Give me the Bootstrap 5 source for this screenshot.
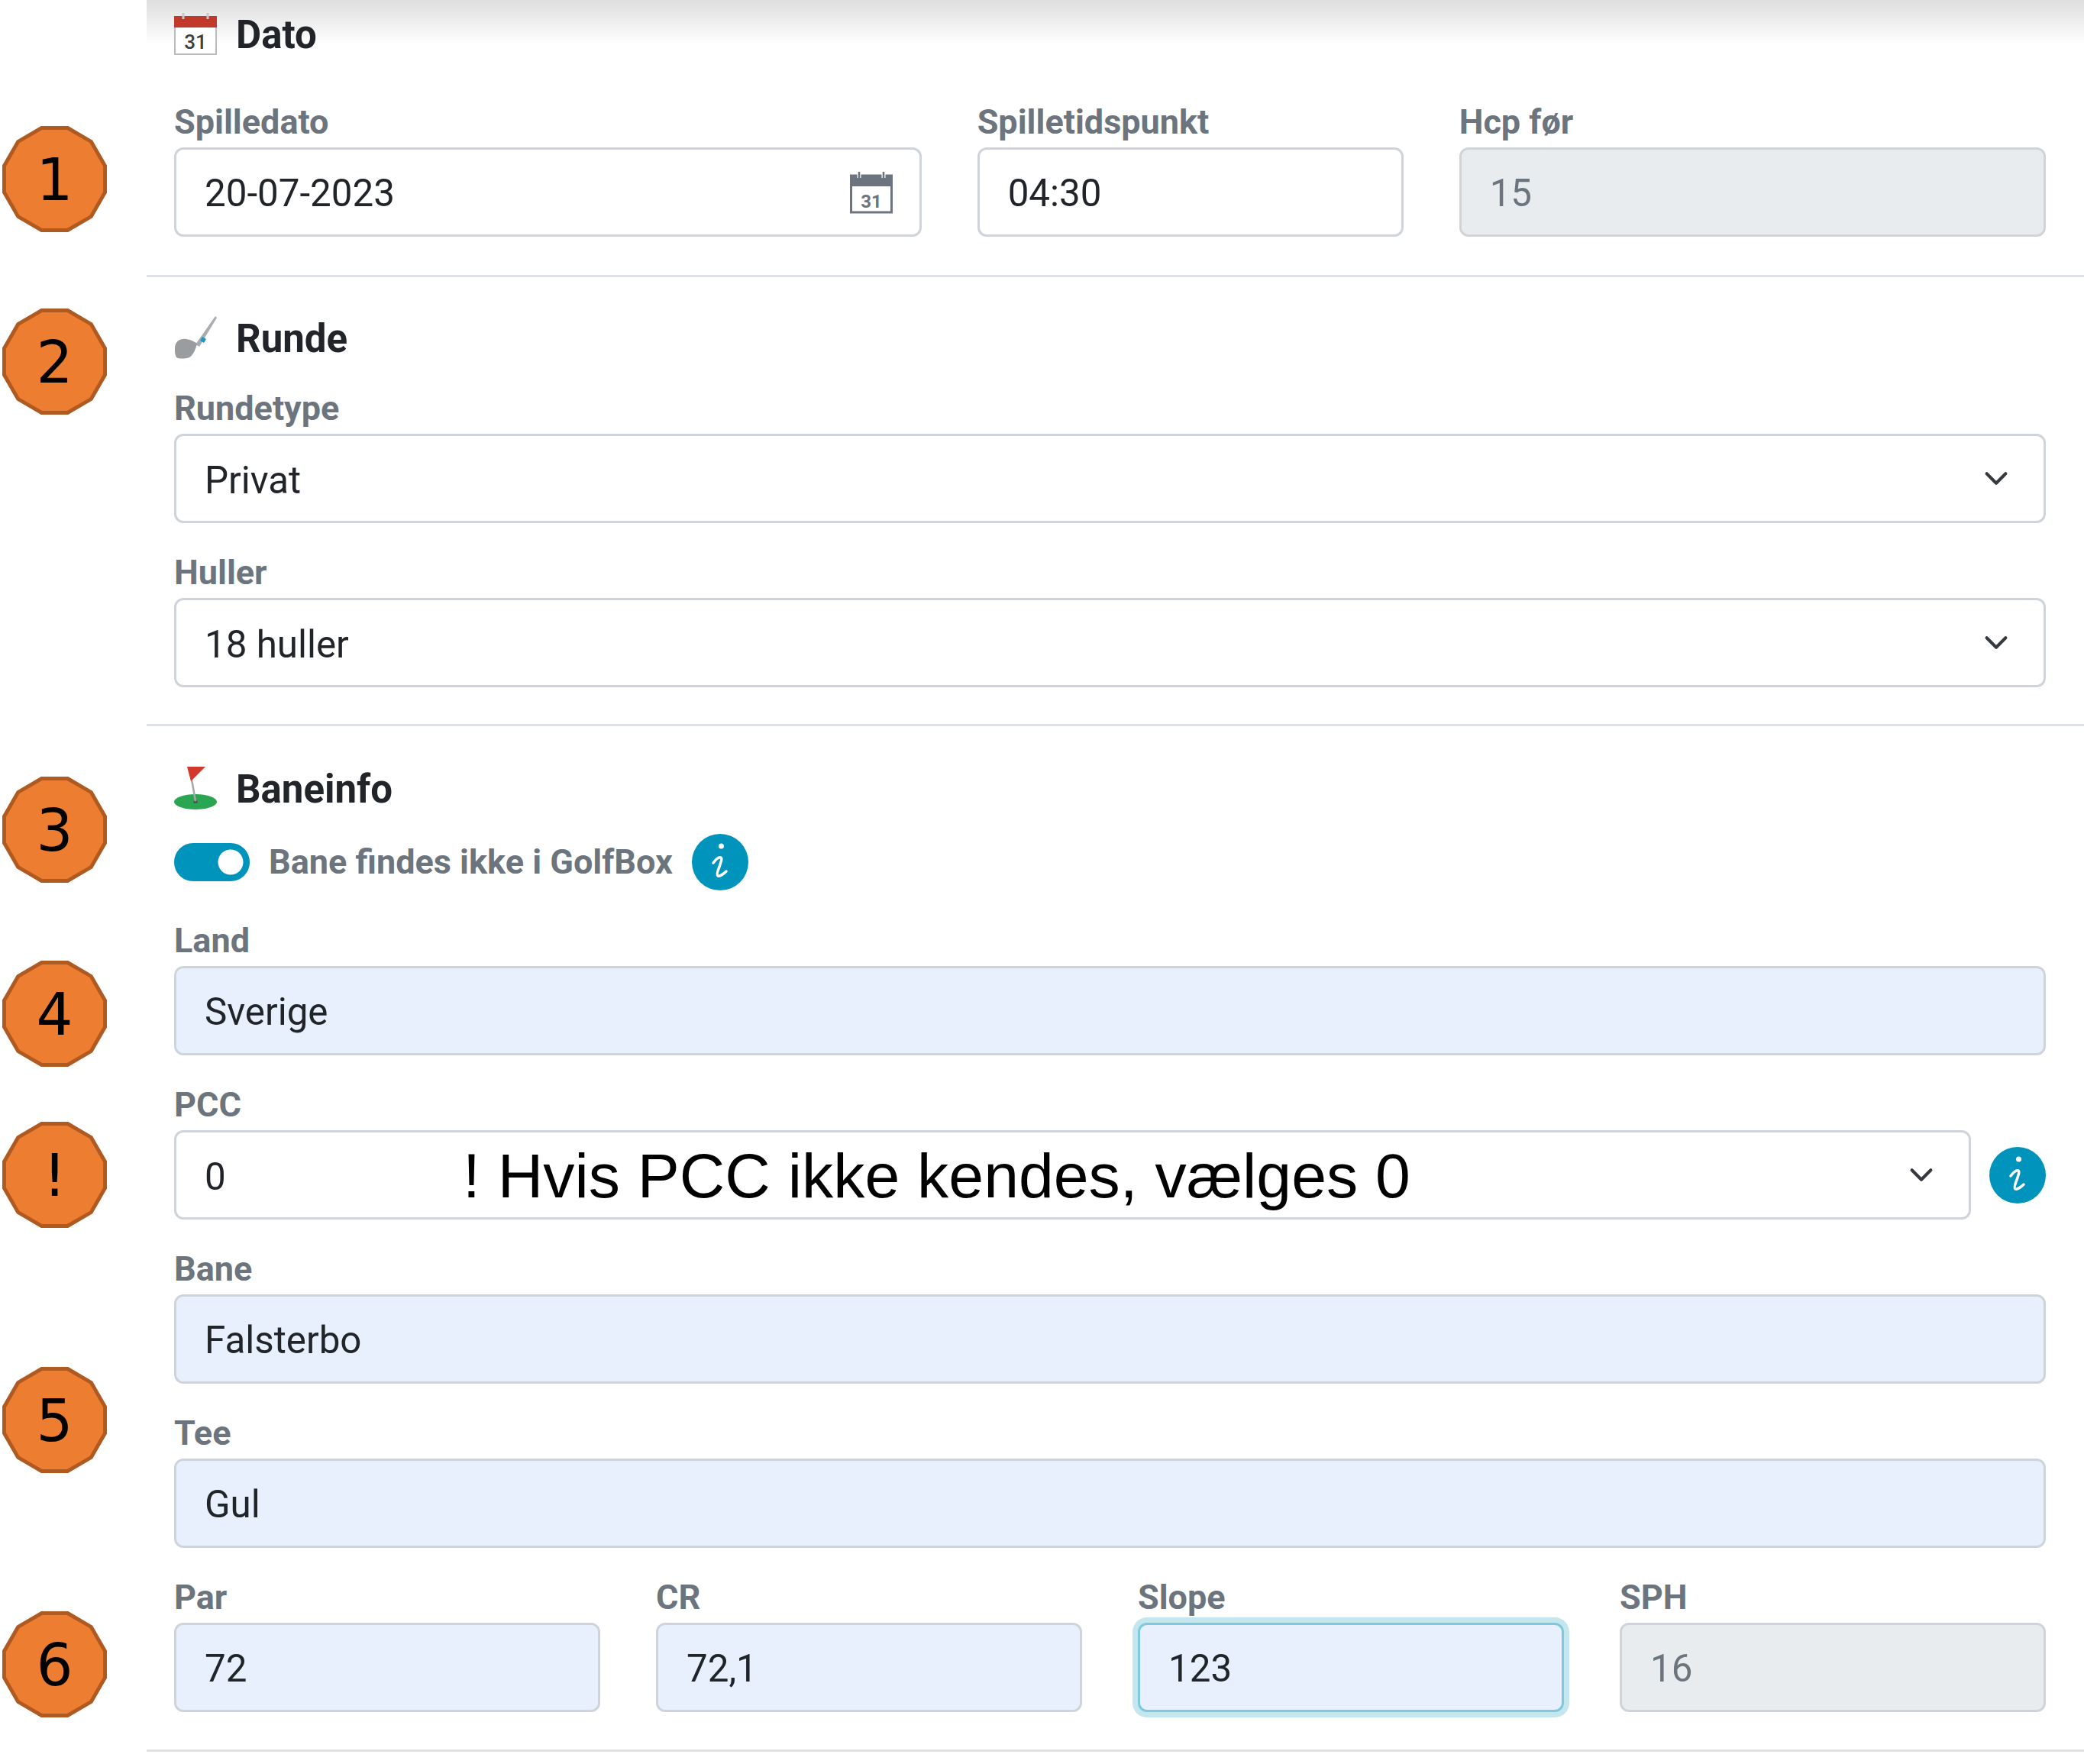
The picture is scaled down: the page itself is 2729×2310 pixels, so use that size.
<!DOCTYPE html>
<html lang="da">
<head>
    <meta charset="UTF-8">
    <meta name="viewport" content="width=device-width, initial-scale=1.0">
    <title>Dato, runde og baneinfo</title>
    <link href="https://cdn.jsdelivr.net/npm/bootstrap@5.3.0/dist/css/bootstrap.min.css" rel="stylesheet">
    <style>
        html { font-size: 49.3px; }
        body { font-family: Roboto, "Open Sans", sans-serif; color: #212529; background: #fff; min-height: 2310px; }

        .page-wrap { position: relative; padding-left: 192px; }

        .sect { padding: 53px 50px 50px 36px; border-bottom: 3px solid #dee2e6; }
        .sect-first { padding-top: 16px; background: linear-gradient(#dedede, #fff) no-repeat top / 100% 58px; }
        .sect-mid { padding-top: 51px; padding-bottom: 48px; }
        .sect-last { padding-bottom: 49px; }

        .sect-head { display: flex; align-items: center; gap: 25px; height: 56px; margin-bottom: 32px; font-size: 51px; font-weight: 700; line-height: 56px; }
        .sect-first .sect-head { margin-bottom: 55px; }
        .sect-head svg { flex: none; width: 56px; height: 56px; }
        .head-txt { padding-top: 3px; }

        .frm-row { --bs-gutter-x: 73px; --bs-gutter-y: 0; }
        .fld { margin-bottom: 32px; }
        .fld-end { margin-bottom: 0; }
        .fld-lab { display: block; margin: 0; font-size: 45px; font-weight: 700; line-height: 66px; color: #6c757d; }

        .form-control, .form-select { height: 117px; padding: 3px 37px 0; border: 3px solid #ced4da; border-radius: 12px; font-size: 49.3px; line-height: 108px; color: #212529; }
        .form-select { padding: 4px 110px 0 37px; background-size: 44px 33px; background-position: right 40px center; }
        .form-control:disabled { background-color: #e9ecef; color: #6c757d; }
        .auto-fill { background-color: #e8f0fe; }
        .auto-fill:focus { background-color: #e8f0fe; }
        .is-focused { border-color: #7fc8dd; box-shadow: 0 0 0 7px #c3e6ef; }

        .date-wrap { position: relative; }
        .date-ico { position: absolute; top: 31px; right: 38px; width: 56px; height: 56px; }

        .tog-row { display: flex; align-items: center; gap: 25px; height: 74px; margin-bottom: 33px; }
        .tog-row .form-check { display: flex; align-items: center; min-height: 0; margin: 0; padding-left: 0; }
        .tog-row .form-check-input { float: none; width: 99px; height: 50px; margin: 0 25px 0 0; border: 3px solid #0093bc; background-color: #0093bc; }
        .tog-label { font-size: 45px; font-weight: 700; line-height: 60px; color: #6c757d; }
        .info-ico { flex: none; width: 74px; height: 74px; }

        .pcc-row { position: relative; display: flex; align-items: center; gap: 24px; }
        .pcc-note { position: absolute; top: 50%; left: 378px; transform: translateY(-50%); font-family: "Liberation Sans", Arial, sans-serif; font-size: 82.4px; line-height: 1; color: #000; white-space: nowrap; }

        .mark-badge { position: absolute; left: 3px; width: 137px; height: 139px; }
        .mark-badge polygon { fill: #ed7d31; stroke: #ae5a21; stroke-width: 5; }
        .mark-badge text { font-family: "DejaVu Sans", sans-serif; font-size: 77px; fill: #000; text-anchor: middle; }
        .mark-1 { top: 165px; }
        .mark-2 { top: 404px; }
        .mark-3 { top: 1017px; }
        .mark-4 { top: 1258px; }
        .mark-5 { top: 1469px; }
        .mark-6 { top: 1790px; }
        .mark-7 { top: 2110px; }
    </style>
</head>
<body>

    <div class="page-wrap">

        <!-- Markers on the left -->
        <svg class="mark-badge mark-1" viewBox="0 0 140 140" preserveAspectRatio="none"><polygon points="87.4,2.5 118.9,20.6 137.5,52.6 137.5,87.4 118.9,119.4 87.4,137.5 52.6,137.5 21.1,119.4 2.5,87.4 2.5,52.6 21.1,20.6 52.6,2.5"/><text x="70" y="98">1</text></svg>
        <svg class="mark-badge mark-2" viewBox="0 0 140 140" preserveAspectRatio="none"><polygon points="87.4,2.5 118.9,20.6 137.5,52.6 137.5,87.4 118.9,119.4 87.4,137.5 52.6,137.5 21.1,119.4 2.5,87.4 2.5,52.6 21.1,20.6 52.6,2.5"/><text x="70" y="98">2</text></svg>
        <svg class="mark-badge mark-3" viewBox="0 0 140 140" preserveAspectRatio="none"><polygon points="87.4,2.5 118.9,20.6 137.5,52.6 137.5,87.4 118.9,119.4 87.4,137.5 52.6,137.5 21.1,119.4 2.5,87.4 2.5,52.6 21.1,20.6 52.6,2.5"/><text x="70" y="98">3</text></svg>
        <svg class="mark-badge mark-4" viewBox="0 0 140 140" preserveAspectRatio="none"><polygon points="87.4,2.5 118.9,20.6 137.5,52.6 137.5,87.4 118.9,119.4 87.4,137.5 52.6,137.5 21.1,119.4 2.5,87.4 2.5,52.6 21.1,20.6 52.6,2.5"/><text x="70" y="98">4</text></svg>
        <svg class="mark-badge mark-5" viewBox="0 0 140 140" preserveAspectRatio="none"><polygon points="87.4,2.5 118.9,20.6 137.5,52.6 137.5,87.4 118.9,119.4 87.4,137.5 52.6,137.5 21.1,119.4 2.5,87.4 2.5,52.6 21.1,20.6 52.6,2.5"/><text x="70" y="98">!</text></svg>
        <svg class="mark-badge mark-6" viewBox="0 0 140 140" preserveAspectRatio="none"><polygon points="87.4,2.5 118.9,20.6 137.5,52.6 137.5,87.4 118.9,119.4 87.4,137.5 52.6,137.5 21.1,119.4 2.5,87.4 2.5,52.6 21.1,20.6 52.6,2.5"/><text x="70" y="98">5</text></svg>
        <svg class="mark-badge mark-7" viewBox="0 0 140 140" preserveAspectRatio="none"><polygon points="87.4,2.5 118.9,20.6 137.5,52.6 137.5,87.4 118.9,119.4 87.4,137.5 52.6,137.5 21.1,119.4 2.5,87.4 2.5,52.6 21.1,20.6 52.6,2.5"/><text x="70" y="98">6</text></svg>

        <!-- Dato -->
        <section class="sect sect-first">
            <div class="sect-head">
                <svg viewBox="0 0 56 56">
                    <rect x="1" y="6" width="54" height="49" fill="#fff" stroke="#b9bcbe" stroke-width="2"/>
                    <rect x="0" y="5" width="56" height="15" fill="#c0392b"/>
                    <path d="M12 1v8M44 1v8" stroke="#c9c9c9" stroke-width="3"/>
                    <text x="28" y="48" font-family="Roboto, sans-serif" font-size="26" font-weight="500" fill="#3a3f44" text-anchor="middle">31</text>
                </svg>
                <span class="head-txt">Dato</span>
            </div>
            <div class="row frm-row">
                <div class="col-5">
                    <label class="fld-lab" for="spilledato">Spilledato</label>
                    <div class="date-wrap">
                        <input class="form-control" id="spilledato" type="text" value="20-07-2023">
                        <svg class="date-ico" viewBox="0 0 56 56">
                            <rect x="1.5" y="6" width="53" height="48" fill="#fff" stroke="#6c757d" stroke-width="3"/>
                            <rect x="0" y="5" width="56" height="15" fill="#6c757d"/>
                            <path d="M12 0v9M44 0v9" stroke="#fff" stroke-width="5"/>
                            <path d="M12 1v8M44 1v8" stroke="#6c757d" stroke-width="2.5"/>
                            <text x="28" y="48" font-family="Roboto, sans-serif" font-size="24" font-weight="700" fill="#6c757d" text-anchor="middle">31</text>
                        </svg>
                    </div>
                </div>
                <div class="col-3">
                    <label class="fld-lab" for="tidspunkt">Spilletidspunkt</label>
                    <input class="form-control" id="tidspunkt" type="text" value="04:30">
                </div>
                <div class="col-4">
                    <label class="fld-lab" for="hcp">Hcp før</label>
                    <input class="form-control" id="hcp" type="text" value="15" disabled>
                </div>
            </div>
        </section>

        <!-- Runde -->
        <section class="sect sect-mid">
            <div class="sect-head">
                <svg viewBox="0 0 56 56">
                    <path d="M28 37 33 40 56 2 54 0z" fill="#a9adb0"/>
                    <path d="M37 27 42 30 39 35 34 32z" fill="#1f9ac0"/>
                    <path d="M1 42C1 33 8 29 16 30 22 31 26 33 30 36 28 44 25 51 20 54 14 56 6 56 3 54 1 51 1 47 1 42z" fill="#9a9da0"/>
                </svg>
                <span class="head-txt">Runde</span>
            </div>
            <div class="fld">
                <label class="fld-lab" for="rundetype">Rundetype</label>
                <select class="form-select" id="rundetype"><option>Privat</option></select>
            </div>
            <div class="fld-end">
                <label class="fld-lab" for="huller">Huller</label>
                <select class="form-select" id="huller"><option>18 huller</option></select>
            </div>
        </section>

        <!-- Baneinfo -->
        <section class="sect sect-last">
            <div class="sect-head">
                <svg viewBox="0 0 56 56">
                    <ellipse cx="28" cy="46" rx="28" ry="10" fill="#2aa652"/>
                    <ellipse cx="28" cy="46" rx="3" ry="2" fill="#555"/>
                    <path d="M20 0 28 45" stroke="#a5a8aa" stroke-width="2.500"/>
                    <path d="M17 0h24L22 19z" fill="#d2382c"/>
                </svg>
                <span class="head-txt">Baneinfo</span>
            </div>
            <div class="tog-row">
                <div class="form-check form-switch">
                    <input class="form-check-input" id="ikkeGolfbox" type="checkbox" role="switch" checked>
                    <label class="tog-label" for="ikkeGolfbox">Bane findes ikke i GolfBox</label>
                </div>
                <svg class="info-ico" viewBox="0 0 74 74">
                    <circle cx="37" cy="37" r="37" fill="#0093bc"/>
                    <circle cx="38.500" cy="16" r="3.500" fill="#fff"/>
                    <path d="M28 38c3-4 7-8 10-7 2 1 0 6-2 12-2 5-4 11-2 12 2 1 7-2 11-6" fill="none" stroke="#fff" stroke-width="3.500" stroke-linecap="round"/>
                </svg>
            </div>
            <div class="fld">
                <label class="fld-lab" for="land">Land</label>
                <input class="form-control auto-fill" id="land" type="text" value="Sverige">
            </div>
            <div class="fld">
                <label class="fld-lab" for="pcc">PCC</label>
                <div class="pcc-row">
                    <select class="form-select" id="pcc"><option>0</option></select>
                    <svg class="info-ico" viewBox="0 0 74 74">
                        <circle cx="37" cy="37" r="37" fill="#0093bc"/>
                        <circle cx="38.500" cy="16" r="3.500" fill="#fff"/>
                        <path d="M28 38c3-4 7-8 10-7 2 1 0 6-2 12-2 5-4 11-2 12 2 1 7-2 11-6" fill="none" stroke="#fff" stroke-width="3.500" stroke-linecap="round"/>
                    </svg>
                    <span class="pcc-note">! Hvis PCC ikke kendes, vælges 0</span>
                </div>
            </div>
            <div class="fld">
                <label class="fld-lab" for="bane">Bane</label>
                <input class="form-control auto-fill" id="bane" type="text" value="Falsterbo">
            </div>
            <div class="fld">
                <label class="fld-lab" for="tee">Tee</label>
                <input class="form-control auto-fill" id="tee" type="text" value="Gul">
            </div>
            <div class="row frm-row">
                <div class="col-3">
                    <label class="fld-lab" for="par">Par</label>
                    <input class="form-control auto-fill" id="par" type="text" value="72">
                </div>
                <div class="col-3">
                    <label class="fld-lab" for="cr">CR</label>
                    <input class="form-control auto-fill" id="cr" type="text" value="72,1">
                </div>
                <div class="col-3">
                    <label class="fld-lab" for="slope">Slope</label>
                    <input class="form-control auto-fill is-focused" id="slope" type="text" value="123">
                </div>
                <div class="col-3">
                    <label class="fld-lab" for="sph">SPH</label>
                    <input class="form-control" id="sph" type="text" value="16" disabled>
                </div>
            </div>
        </section>
    </div>

    <script src="https://cdn.jsdelivr.net/npm/bootstrap@5.3.0/dist/js/bootstrap.bundle.min.js"></script>
</body>
</html>
